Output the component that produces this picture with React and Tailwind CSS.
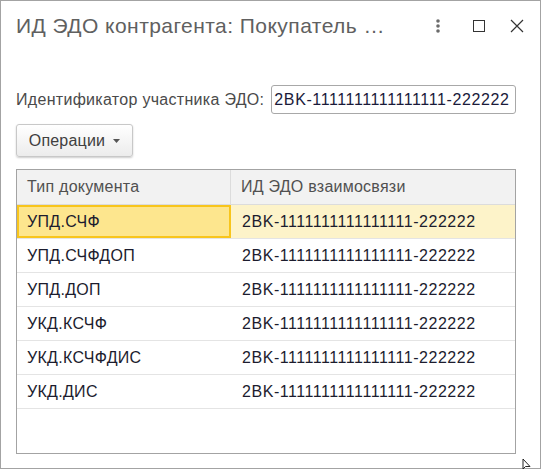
const ROWS = [
  'УПД.СЧФ',
  'УПД.СЧФДОП',
  'УПД.ДОП',
  'УКД.КСЧФ',
  'УКД.КСЧФДИС',
  'УКД.ДИС',
];

const ID = '2BK-1111111111111111-222222';

export default function App() {
  return (
    <div className="w-[542px] h-[470px] bg-white" style={{ fontFamily: '"Liberation Sans", Arial, sans-serif' }}>
      <div className="w-[541px] h-[469px] border border-[#a3a3a3] flex flex-col relative">
        {/* Title bar */}
        <div className="h-[50px] flex items-center pl-[15px] pr-[16px]">
          <div className="flex-1 text-[21px] tracking-[0.45px] text-[#606060] truncate">ИД ЭДО контрагента: Покупатель …</div>
          <div className="flex items-center">
            <svg width="6" height="16" viewBox="0 0 6 16" className="mr-[32px]">
              <circle cx="3" cy="3" r="1.8" fill="#6b6b6b" />
              <circle cx="3" cy="8" r="1.8" fill="#6b6b6b" />
              <circle cx="3" cy="13" r="1.8" fill="#6b6b6b" />
            </svg>
            <svg width="12" height="12" viewBox="0 0 12 12" className="mr-[25px]">
              <rect x="0.5" y="0.5" width="11" height="11" fill="none" stroke="#333" strokeWidth="1" />
            </svg>
            <svg width="14" height="14" viewBox="0 0 14 14">
              <path d="M1 1 L13 13 M13 1 L1 13" stroke="#333" strokeWidth="1.2" />
            </svg>
          </div>
        </div>

        <div className="pl-[15px] pr-[24px] pt-[34px] flex flex-col">
          {/* Identifier field */}
          <div className="flex items-center h-[29px]">
            <span className="text-[16px] tracking-[0.3px] text-[#4a4a4a] mr-[7px]">Идентификатор участника ЭДО:</span>
            <div className="flex-1 h-[29px] border border-[#a8a8a8] rounded-[3px] flex items-center px-[2px] text-[16px] tracking-[0.6px] text-[#1a1a3a] overflow-hidden whitespace-nowrap">
              {ID}
            </div>
          </div>

          {/* Operations button */}
          <div className="mt-[10px]">
            <button className="h-[33px] w-[117px] border border-[#c8c8c8] rounded-[3px] bg-gradient-to-b from-white to-[#ececec] shadow-[0_1px_2px_rgba(0,0,0,0.2)] flex items-center justify-center text-[16px] tracking-[0.2px] text-[#404040]">
              Операции
              <svg width="7" height="4" viewBox="0 0 7 4" className="ml-[8px] mt-[1px]">
                <path d="M0 0 L7 0 L3.5 4 Z" fill="#555" />
              </svg>
            </button>
          </div>

          {/* Table */}
          <div className="mt-[12px] h-[285px] border border-[#a3a3a3] flex flex-col overflow-hidden">
            <div className="h-[35px] bg-[#f2f2f2] border-b border-[#dcdcdc] flex text-[16px] tracking-[0.25px] text-[#505050] shrink-0">
              <div className="w-[214px] border-r border-[#dcdcdc] flex items-center pl-[10px]">Тип документа</div>
              <div className="flex-1 flex items-center pl-[10px]">ИД ЭДО взаимосвязи</div>
            </div>
            {ROWS.map((name, i) => {
              const sel = i === 0;
              return (
                <div key={name} className={`h-[34px] flex text-[16px] tracking-[0.3px] text-[#1c1c2e] border-b border-[#e4e4e4] shrink-0 ${sel ? 'bg-[#fdf3c9]' : ''}`}>
                  <div className={`w-[214px] flex items-center ${sel ? 'bg-[#fde68e] border-2 border-[#f8c51c] pl-[8px]' : 'pl-[10px]'}`}>{name}</div>
                  <div className="flex-1 flex items-center pl-[11px] tracking-[0.55px]">{ID}</div>
                </div>
              );
            })}
          </div>
        </div>

        {/* resize grip cursor */}
        <svg width="10" height="12" viewBox="0 0 10 12" className="absolute right-[8px] bottom-[-2px]">
          <path d="M1 1 L1 11 L3.5 8.5 L8 8.5 Z" fill="white" stroke="#222" strokeWidth="1" />
        </svg>
      </div>
    </div>
  );
}
